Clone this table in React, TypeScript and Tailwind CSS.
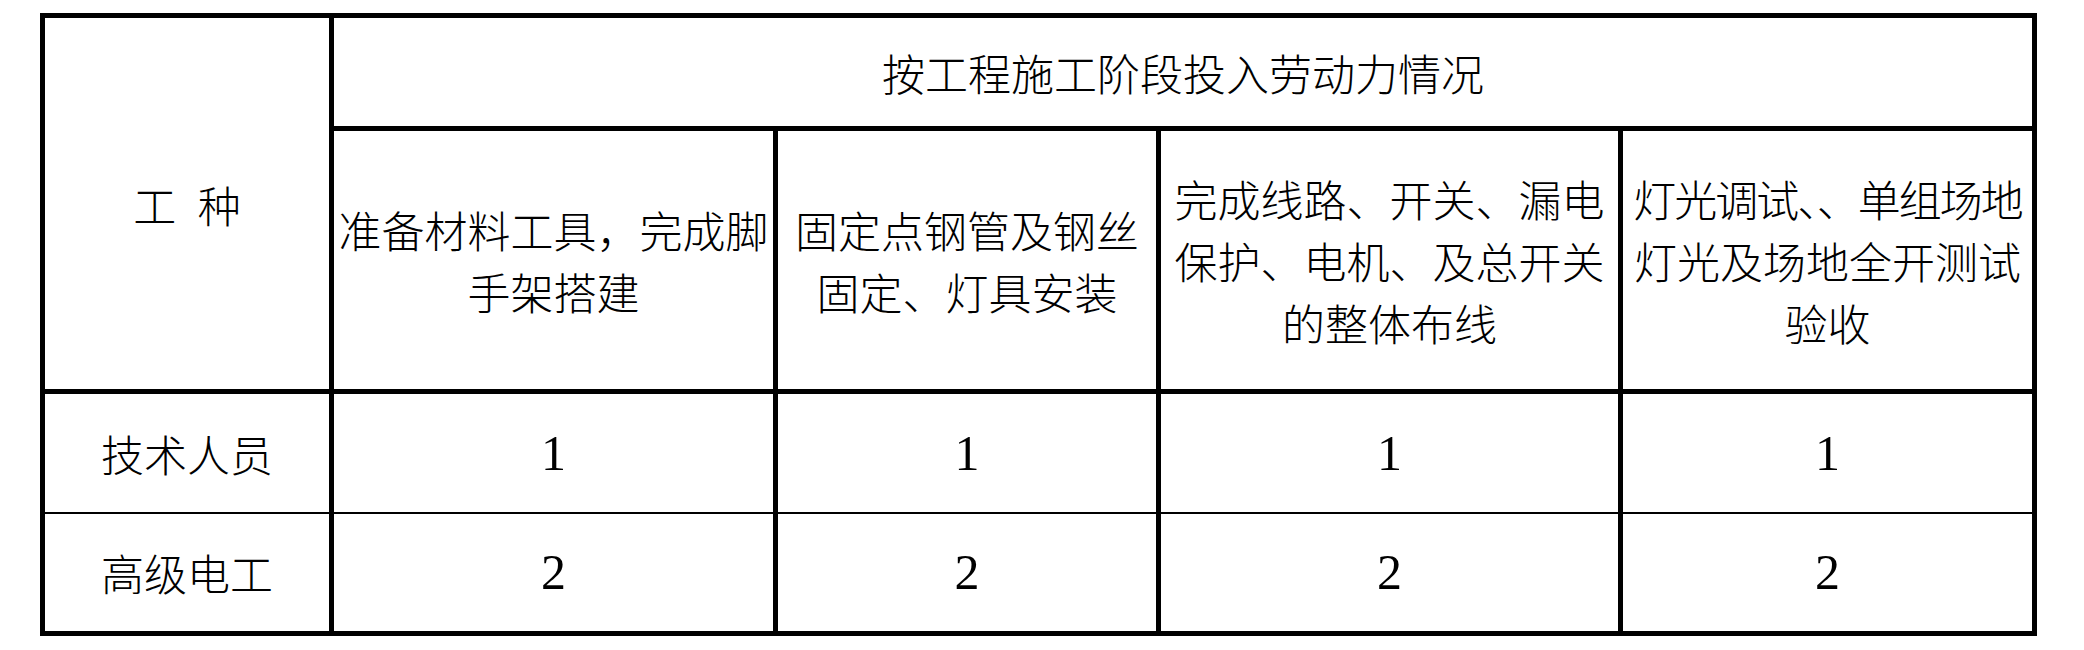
const stages = [
  ["准备材料工具，完成脚", "手架搭建"],
  ["固定点钢管及钢丝", "固定、灯具安装"],
  ["完成线路、开关、漏电", "保护、电机、及总开关", "的整体布线"],
  ["灯光调试、、单组场地", "灯光及场地全开测试", "验收"],
];

const rows = [
  { name: "技术人员", counts: [1, 1, 1, 1], last: false },
  { name: "高级电工", counts: [2, 2, 2, 2], last: true },
];

const App = () => {
  return (
    <div className="min-h-screen bg-white pl-[40px] pt-[13px]">
      <table className="table-fixed border-collapse w-[1992px] text-black font-['Noto_Sans_CJK_SC',sans-serif] font-light text-[43px] leading-[62px]">
        <colgroup>
          <col className="w-[289px]" />
          <col className="w-[444px]" />
          <col className="w-[383px]" />
          <col className="w-[462px]" />
          <col className="w-[414px]" />
        </colgroup>
        <tbody>
          <tr className="h-[113px]">
            <td rowSpan={2} className="border-[5px] border-black p-0 text-center align-middle">
              <span className="[word-spacing:12px]">工 种</span>
            </td>
            <td colSpan={4} className="border-[5px] border-black p-0 text-center align-middle">
              按工程施工阶段投入劳动力情况
            </td>
          </tr>
          <tr className="h-[263px]">
            {stages.map((lines, i) => (
              <td key={i} className="border-[5px] border-black p-0 text-center align-middle whitespace-nowrap">
                {lines.map((line, j) => (
                  <div key={j} className={line.includes("、、") ? "tracking-[-2px]" : ""}>
                    {line}
                  </div>
                ))}
              </td>
            ))}
          </tr>
          {rows.map((row) => (
            <tr key={row.name} className="h-[121px]">
              <td
                className={
                  row.last
                    ? "border-x-[5px] border-b-[5px] border-t-[2px] border-black p-0 text-center align-middle"
                    : "border-x-[5px] border-t-[5px] border-b-[2px] border-black p-0 text-center align-middle"
                }
              >
                {row.name}
              </td>
              {row.counts.map((n, i) => (
                <td
                  key={i}
                  className={
                    row.last
                      ? "border-x-[5px] border-b-[5px] border-t-[2px] border-black p-0 text-center align-middle font-['Liberation_Serif',serif] font-normal text-[50px]"
                      : "border-x-[5px] border-t-[5px] border-b-[2px] border-black p-0 text-center align-middle font-['Liberation_Serif',serif] font-normal text-[50px]"
                  }
                >
                  {n}
                </td>
              ))}
            </tr>
          ))}
        </tbody>
      </table>
    </div>
  );
};

export default App;
